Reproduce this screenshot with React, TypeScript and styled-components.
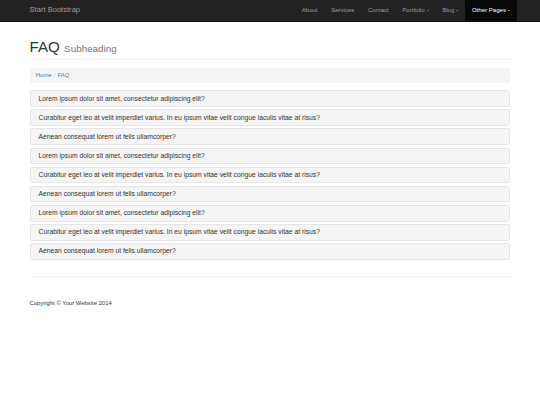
import styled, { createGlobalStyle } from "styled-components";

// the whole layout is drawn at a reduced scale of the usual bootstrap metrics
const S = 0.421875;
const px = (n: number) => `${n * S}px`;

const GlobalStyle = createGlobalStyle`
  html, body {
    margin: 0;
    padding: 0;
    background: #fff;
  }
  body {
    font-family: "Liberation Sans", Arial, Helvetica, sans-serif;
    font-size: ${px(14)};
    line-height: 1.42857;
    color: #333;
  }
`;

const Navbar = styled.nav`
  background-color: #222;
  border-bottom: 1px solid #111;
  height: ${px(50)};
`;

const Container = styled.div`
  width: ${px(1170)};
  margin: 0 auto;
  padding: 0 ${px(15)};
  box-sizing: border-box;
`;

const NavInner = styled(Container)`
  display: flex;
  align-items: stretch;
  height: 100%;
`;

const Brand = styled.a`
  display: flex;
  align-items: center;
  font-size: ${px(18)};
  color: #9d9d9d;
  text-decoration: none;
`;

const NavSpacer = styled.div`
  flex: 1;
`;

const NavList = styled.ul`
  display: flex;
  list-style: none;
  margin: 0 ${px(-15)} 0 0;
  padding: 0;
`;

const NavLink = styled.a<{ $active?: boolean }>`
  display: flex;
  align-items: center;
  height: 100%;
  padding: 0 ${px(16)};
  font-size: ${px(14.4)};
  color: ${(p) => (p.$active ? "#fff" : "#9d9d9d")};
  background: ${(p) => (p.$active ? "#080808" : "transparent")};
  text-decoration: none;
  white-space: nowrap;
`;

const Caret = styled.span`
  display: inline-block;
  width: 0;
  height: 0;
  margin-left: ${px(5)};
  border-top: ${px(4)} solid currentColor;
  border-left: ${px(4)} solid transparent;
  border-right: ${px(4)} solid transparent;
`;

const PageHeader = styled.h1`
  margin: ${px(40)} 0 ${px(18)};
  padding-bottom: ${px(9)};
  border-bottom: 1px solid #f2f2f2;
  font-size: ${px(36)};
  font-weight: 500;
  line-height: 1.1;
  color: #333;
`;

const Small = styled.small`
  font-size: 65%;
  font-weight: 400;
  color: #777;
`;

const Breadcrumb = styled.ol`
  display: flex;
  list-style: none;
  margin: 0 0 ${px(17)};
  padding: ${px(8)} ${px(15)};
  background-color: #f5f5f5;
  border-radius: ${px(4)};
`;

const Crumb = styled.li<{ $active?: boolean }>`
  color: ${(p) => (p.$active ? "#777" : "#337ab7")};
`;

const Divider = styled.span`
  padding: 0 ${px(5)};
  color: #ccc;
`;

const PanelGroup = styled.div`
  display: flex;
  flex-direction: column;
  gap: ${px(5)};
  margin-bottom: ${px(20)};
`;

const Panel = styled.div`
  border: 1px solid #e6e6e6;
  border-radius: ${px(4)};
  background: #f5f5f5;
`;

const PanelTitle = styled.h4`
  margin: 0;
  padding: 3.75px 8px;
  font-size: ${px(16)};
  font-weight: 500;
  line-height: 1.1;
  color: #333;
`;

const Rule = styled.hr`
  margin: ${px(40)} 0 0;
  border: 0;
  border-top: 1px solid #f2f2f2;
`;

const Footer = styled.footer`
  margin: ${px(50)} 0;
`;

const FooterText = styled.p`
  margin: 0 0 ${px(10)};
`;

const questions = [
  "Lorem ipsum dolor sit amet, consectetur adipiscing elit?",
  "Curabitur eget leo at velit imperdiet varius. In eu ipsum vitae velit congue iaculis vitae at risus?",
  "Aenean consequat lorem ut felis ullamcorper?",
];

const navItems: { label: string; caret?: boolean; active?: boolean }[] = [
  { label: "About" },
  { label: "Services" },
  { label: "Contact" },
  { label: "Portfolio", caret: true },
  { label: "Blog", caret: true },
  { label: "Other Pages", caret: true, active: true },
];

export default function App() {
  const faq = [...questions, ...questions, ...questions];
  return (
    <>
      <GlobalStyle />
      <Navbar>
        <NavInner>
          <Brand href="#">Start Bootstrap</Brand>
          <NavSpacer />
          <NavList>
            {navItems.map((item) => (
              <li key={item.label}>
                <NavLink href="#" $active={item.active}>
                  {item.label}
                  {item.caret && <Caret />}
                </NavLink>
              </li>
            ))}
          </NavList>
        </NavInner>
      </Navbar>
      <Container>
        <PageHeader>
          FAQ <Small>Subheading</Small>
        </PageHeader>
        <Breadcrumb>
          <Crumb>Home</Crumb>
          <Divider>/</Divider>
          <Crumb $active>FAQ</Crumb>
        </Breadcrumb>
        <PanelGroup>
          {faq.map((q, i) => (
            <Panel key={i}>
              <PanelTitle>{q}</PanelTitle>
            </Panel>
          ))}
        </PanelGroup>
        <Rule />
        <Footer>
          <FooterText>Copyright &copy; Your Website 2014</FooterText>
        </Footer>
      </Container>
    </>
  );
}
